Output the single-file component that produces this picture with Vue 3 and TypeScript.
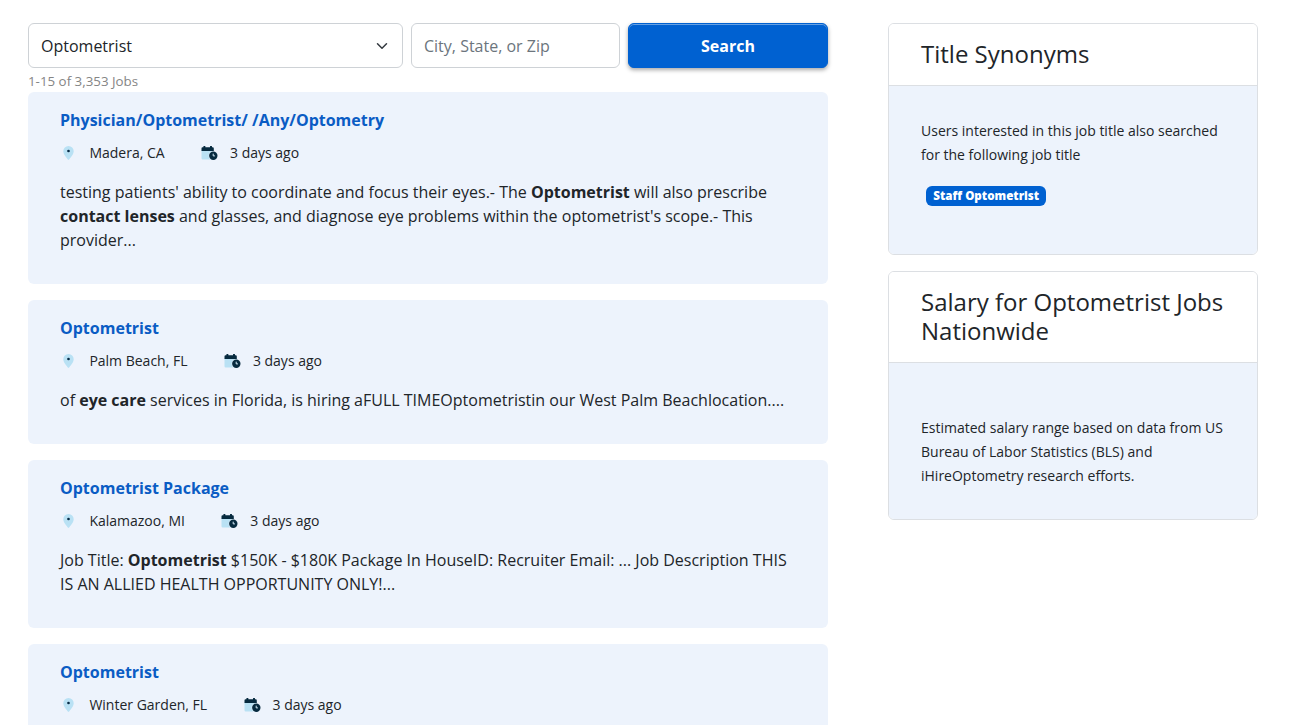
<script setup lang="ts">
interface Segment {
  text: string
  strong?: boolean
}

interface Job {
  title: string
  location: string
  posted: string
  summary: Segment[]
}

const jobs: Job[] = [
  {
    title: 'Physician/Optometrist/ /Any/Optometry',
    location: 'Madera, CA',
    posted: '3 days ago',
    summary: [
      { text: "testing patients' ability to coordinate and focus their eyes.- The " },
      { text: 'Optometrist', strong: true },
      { text: ' will also prescribe ' },
      { text: 'contact lenses', strong: true },
      { text: " and glasses, and diagnose eye problems within the optometrist's scope.- This provider..." },
    ],
  },
  {
    title: 'Optometrist',
    location: 'Palm Beach, FL',
    posted: '3 days ago',
    summary: [
      { text: 'of ' },
      { text: 'eye care', strong: true },
      { text: ' services in Florida, is hiring aFULL TIMEOptometristin our West Palm Beachlocation....' },
    ],
  },
  {
    title: 'Optometrist Package',
    location: 'Kalamazoo, MI',
    posted: '3 days ago',
    summary: [
      { text: 'Job Title: ' },
      { text: 'Optometrist', strong: true },
      { text: ' $150K - $180K Package In HouseID: Recruiter Email: ... Job Description THIS IS AN ALLIED HEALTH OPPORTUNITY ONLY!...' },
    ],
  },
  {
    title: 'Optometrist',
    location: 'Winter Garden, FL',
    posted: '3 days ago',
    summary: [],
  },
]
</script>

<template>
  <div class="page">
    <main class="results">
      <form class="search" @submit.prevent>
        <div class="field select">
          <span>Optometrist</span>
          <svg width="12" height="12" viewBox="0 0 16 16" fill="none">
            <path d="m2 5 6 6 6-6" stroke="#343a40" stroke-width="2" stroke-linecap="round" stroke-linejoin="round" />
          </svg>
        </div>
        <input class="field where" type="text" placeholder="City, State, or Zip" />
        <button class="submit" type="submit">Search</button>
      </form>
      <div class="count">1-15 of 3,353 Jobs</div>

      <article v-for="job in jobs" :key="job.location" class="job">
        <h2 class="job-title">{{ job.title }}</h2>
        <div class="meta">
          <svg class="pin" width="11" height="14" viewBox="0 0 11 14">
            <path d="M5.5 0A5.2 5.2 0 0 0 .3 5.2C.3 8 3.3 11.7 5.5 14 7.7 11.7 10.7 8 10.7 5.2A5.2 5.2 0 0 0 5.5 0Z" fill="#b9e1f4" />
            <circle cx="5.5" cy="5" r="1.35" fill="#062a45" />
          </svg>
          <span class="location">{{ job.location }}</span>
          <svg class="calendar" width="17" height="14" viewBox="0 0 17 14">
            <path d="M.5 4.5h12.3v9H1.7A1.2 1.2 0 0 1 .5 12.3Z" fill="#b9e1f4" />
            <path d="M2.4.8a1 1 0 0 1 2 0v.5H9V.8a1 1 0 0 1 2 0v.5h.7a1.1 1.1 0 0 1 1.1 1.1V5H.5V2.4a1.1 1.1 0 0 1 1.1-1.1h.8Z" fill="#062a3f" />
            <circle cx="12.3" cy="9.8" r="4.6" fill="#edf3fc" />
            <circle cx="12.3" cy="9.8" r="4.2" fill="#062a3f" />
            <path d="M12.2 7.7v2.2h1.7" fill="none" stroke="#d8effc" stroke-width="1" />
          </svg>
          <span>{{ job.posted }}</span>
        </div>
        <p class="summary">
          <template v-for="(part, i) in job.summary" :key="i"><strong v-if="part.strong">{{ part.text }}</strong><template v-else>{{ part.text }}</template></template>
        </p>
      </article>
    </main>

    <aside class="sidebar">
      <section class="panel synonyms">
        <h4>Title Synonyms</h4>
        <div class="panel-body">
          <p>Users interested in this job title also searched for the following job title</p>
          <span class="badge">Staff Optometrist</span>
        </div>
      </section>
      <section class="panel salary">
        <h4>Salary for Optometrist Jobs Nationwide</h4>
        <div class="panel-body">
          <p>Estimated salary range based on data from US Bureau of Labor Statistics (BLS) and iHireOptometry research efforts.</p>
        </div>
      </section>
    </aside>
  </div>
</template>

<style>
body {
  background: #fff;
  overflow: hidden;
}
</style>

<style scoped>
.page {
  box-sizing: border-box;
  display: flex;
  align-items: flex-start;
  gap: 60px;
  height: 725px;
  padding: 23px 42px 0 28px;
  overflow: hidden;
  color: #212529;
  font: 400 16px/24px "Open Sans", sans-serif;
}
.page * {
  box-sizing: border-box;
}
.results {
  width: 800px;
}
.search {
  display: flex;
  gap: 8px;
  height: 45px;
}
.field {
  height: 45px;
  padding: 0 12px;
  border: 1px solid #ced2d6;
  border-radius: 6px;
  background: #fff;
  color: #212529;
  font: inherit;
}
.select {
  display: flex;
  align-items: center;
  justify-content: space-between;
  width: 375px;
}
.select svg {
  margin-right: 2px;
}
.where {
  width: 209px;
  outline: none;
}
.where::placeholder {
  color: #6c757d;
  opacity: 1;
}
.submit {
  width: 200px;
  padding: 0;
  border: 1px solid #0061d1;
  border-radius: 6px;
  background: #0061d1;
  box-shadow: inset 0 1px 0 rgba(255, 255, 255, 0.4), 0 2px 4px rgba(0, 0, 0, 0.35);
  color: #fff;
  font: 700 16px/24px "Open Sans", sans-serif;
}
.count {
  height: 24px;
  padding-top: 4px;
  color: #858585;
  font-size: 13.33px;
  line-height: 19px;
}
.job {
  margin-bottom: 16px;
  padding: 16px 32px 32px;
  border-radius: 6px;
  background: #edf3fc;
}
.job-title {
  margin: 0;
  color: #0a5cc4;
  font-size: 16px;
  font-weight: 700;
  line-height: 24px;
}
.meta {
  display: flex;
  align-items: center;
  height: 21px;
  margin: 10px 0 17px;
  font-size: 14px;
  line-height: 21px;
}
.pin {
  margin: 0 15.2px 0 3.2px;
}
.location {
  margin-right: 36.4px;
}
.calendar {
  margin-right: 12px;
}
.summary {
  min-height: 24px;
  margin: 0;
}
.sidebar {
  display: flex;
  flex-direction: column;
  gap: 16px;
  width: 370px;
}
.panel {
  border: 1px solid #dcdfe3;
  border-radius: 6px;
  overflow: hidden;
}
.synonyms {
  height: 232px;
}
.salary {
  height: 249px;
}
.panel h4 {
  margin: 0;
  padding: 16px 32px;
  border-bottom: 1px solid #dcdfe3;
  background: #fff;
  font-size: 24px;
  font-weight: 400;
  line-height: 28.8px;
}
.panel-body {
  height: 100%;
  padding: 33px 32px;
  background: #edf3fc;
  font-size: 14px;
}
.salary .panel-body {
  padding-top: 53px;
}
.panel-body p {
  margin: 0;
}
.badge {
  display: block;
  width: max-content;
  height: 20px;
  margin: 19px 0 0 5px;
  padding: 0 7.3px;
  border-radius: 6px;
  background: #0061d1;
  color: #fff;
  font-size: 11.6px;
  font-weight: 800;
  line-height: 20px;
}
</style>
